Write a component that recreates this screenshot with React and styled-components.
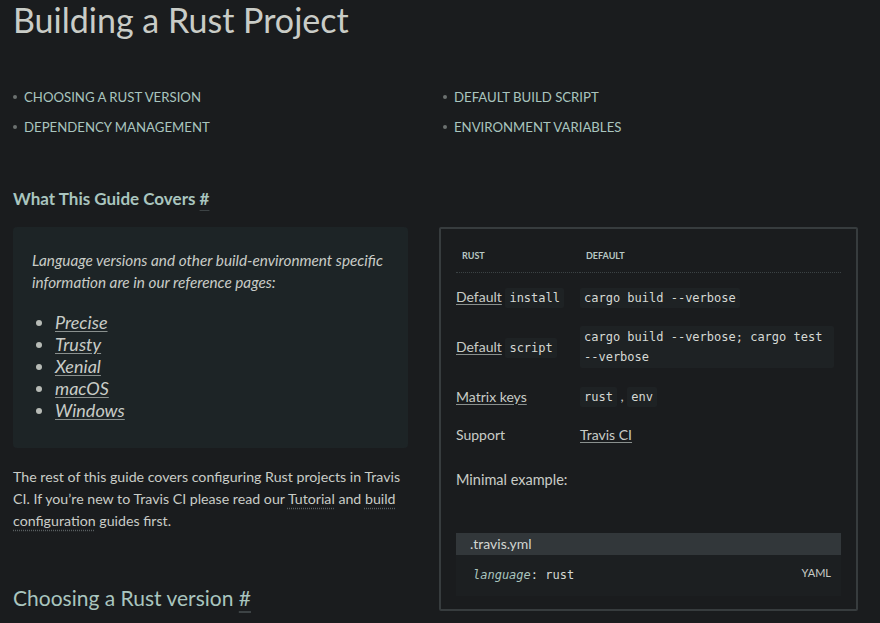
import React from 'react'
import styled, { createGlobalStyle } from 'styled-components'

const GlobalStyle = createGlobalStyle`
  body {
    margin: 0;
    background: #1a1c1e;
    font-family: 'Lato', 'Liberation Sans', sans-serif;
    color: #c9ccc7;
    overflow: hidden;
  }
`

const Page = styled.main`
  padding: 0 22px 0 13px;
  height: 623px;
  overflow: hidden;
`

const Title = styled.h1`
  margin: 0;
  padding-top: 1px;
  font-size: 34px;
  font-weight: 400;
  line-height: 38px;
  color: #c9ccc7;
`

const Toc = styled.ul`
  display: grid;
  grid-template-columns: 430px 1fr;
  row-gap: 12px;
  margin: 49px 0 0;
  padding: 0;
  list-style: none;
`

const TocItem = styled.li`
  display: flex;
  align-items: center;
  gap: 7px;
  font-size: 13.2px;
  line-height: 18px;
  text-transform: uppercase;
  color: #a9c5bf;

  &::before {
    content: '';
    width: 4px;
    height: 4px;
    border-radius: 50%;
    background: #6b7170;
  }
`

const Columns = styled.div`
  display: grid;
  grid-template-columns: 395px 419px;
  column-gap: 31px;
  margin-top: 52px;
  align-items: start;
`

const Section = styled.section``

const Heading = styled.h3`
  margin: 0 0 17px;
  font-size: 17px;
  font-weight: 700;
  line-height: 22px;
  color: #a9c5bf;
`

const SubHeading = styled.h2`
  margin: 52px 0 0;
  font-size: 21px;
  font-weight: 400;
  line-height: 28px;
  color: #a9c5bf;
`

const Anchor = styled.span`
  text-decoration: underline;
  text-decoration-color: #3d4345;
  text-underline-offset: 5px;
`

const Note = styled.div`
  background: #1d2426;
  border-radius: 4px;
  padding: 22px 22px 27px 19px;
  font-style: italic;
  font-size: 15.3px;
  line-height: 22px;
`

const NoteText = styled.p`
  margin: 0 0 18px;
`

const NoteList = styled.ul`
  margin: 0;
  padding-left: 23px;
  font-size: 18px;
  line-height: 22px;

  li::marker {
    color: #b7bbb6;
  }
`

const Link = styled.a`
  color: #c9ccc7;
  text-decoration: underline;
  text-underline-offset: 2px;
  text-decoration-color: #8a908e;
`

const DottedLink = styled.a`
  color: inherit;
  text-decoration: underline dotted #5a6062;
  text-underline-offset: 4px;
`

const Para = styled.p`
  margin: 18px 0 0;
  font-size: 14.2px;
  line-height: 22px;
`

const Panel = styled.aside`
  margin-top: 39px;
  border: 2px solid #373c3e;
  border-radius: 2px;
  padding: 14px 15px 13px;
`

const Table = styled.table`
  width: 100%;
  border-collapse: collapse;
`

const Th = styled.th`
  text-align: left;
  font-size: 9px;
  font-weight: 700;
  text-transform: uppercase;
  color: #b8c8c4;
  padding: 7px 6px 11px;
  border-bottom: 1px dotted #3b4244;
`

const Td = styled.td`
  padding: ${p => (p.$top ? '14px' : '9px')} 0 ${p => (p.$last ? '11px' : '9px')};
  font-size: 14px;
  line-height: 20px;
  vertical-align: middle;
  width: ${p => (p.$first ? '124px' : 'auto')};
`

const Code = styled.code`
  font-family: 'DejaVu Sans Mono', 'Liberation Mono', monospace;
  font-size: 12px;
  line-height: 20px;
  background: #1e2224;
  color: #d6d9d4;
  padding: ${p => (p.$block ? '1px 4px' : '3px 4px')};
  border-radius: 2px;
  display: ${p => (p.$block ? 'inline-block' : 'inline')};
  max-width: ${p => (p.$block ? '246px' : 'none')};
`

const Minimal = styled.p`
  margin: 13px 0 0;
  font-size: 14.5px;
  line-height: 22px;
`

const CodeBlock = styled.div`
  margin-top: 42px;
`

const CodeHeader = styled.div`
  background: #32373a;
  font-size: 14px;
  line-height: 22px;
  color: #d3d6d2;
  padding: 0 14px;
`

const CodeBody = styled.div`
  display: flex;
  justify-content: space-between;
  background: #1c1f21;
  padding: 10px 10px 11px 17px;
`

const CodeLine = styled.pre`
  margin: 0;
  font-family: 'DejaVu Sans Mono', 'Liberation Mono', monospace;
  font-size: 12px;
  line-height: 20px;
  color: #d6d9d4;
`

const Key = styled.span`
  color: #a9c5bf;
  font-style: italic;
`

const Lang = styled.span`
  font-size: 11px;
  color: #c9ccc7;
  line-height: 16px;
`

export default function App() {
  return (
    <>
      <GlobalStyle />
      <Page>
        <Title>Building a Rust Project</Title>
        <Toc>
          <TocItem>Choosing a Rust version</TocItem>
          <TocItem>Default build script</TocItem>
          <TocItem>Dependency management</TocItem>
          <TocItem>Environment variables</TocItem>
        </Toc>
        <Columns>
          <Section>
            <Heading>What This Guide Covers <Anchor>#</Anchor></Heading>
            <Note>
              <NoteText>
                Language versions and other build-environment specific information are in our reference pages:
              </NoteText>
              <NoteList>
                <li><Link href="#">Precise</Link></li>
                <li><Link href="#">Trusty</Link></li>
                <li><Link href="#">Xenial</Link></li>
                <li><Link href="#">macOS</Link></li>
                <li><Link href="#">Windows</Link></li>
              </NoteList>
            </Note>
            <Para>
              The rest of this guide covers configuring Rust projects in Travis CI. If you’re new to Travis CI please read our <DottedLink href="#">Tutorial</DottedLink> and <DottedLink href="#">build configuration</DottedLink> guides first.
            </Para>
            <SubHeading>Choosing a Rust version <Anchor>#</Anchor></SubHeading>
          </Section>
          <Panel>
            <Table>
              <thead>
                <tr>
                  <Th>Rust</Th>
                  <Th>Default</Th>
                </tr>
              </thead>
              <tbody>
                <tr>
                  <Td $first $top><Link href="#">Default</Link> <Code>install</Code></Td>
                  <Td $top><Code>cargo build --verbose</Code></Td>
                </tr>
                <tr>
                  <Td $first><Link href="#">Default</Link> <Code>script</Code></Td>
                  <Td><Code $block>cargo build --verbose; cargo test --verbose</Code></Td>
                </tr>
                <tr>
                  <Td $first><Link href="#">Matrix keys</Link></Td>
                  <Td><Code>rust</Code> , <Code>env</Code></Td>
                </tr>
                <tr>
                  <Td $first $last>Support</Td>
                  <Td $last><Link href="#">Travis CI</Link></Td>
                </tr>
              </tbody>
            </Table>
            <Minimal>Minimal example:</Minimal>
            <CodeBlock>
              <CodeHeader>.travis.yml</CodeHeader>
              <CodeBody>
                <CodeLine><Key>language</Key>: rust</CodeLine>
                <Lang>YAML</Lang>
              </CodeBody>
            </CodeBlock>
          </Panel>
        </Columns>
      </Page>
    </>
  )
}
